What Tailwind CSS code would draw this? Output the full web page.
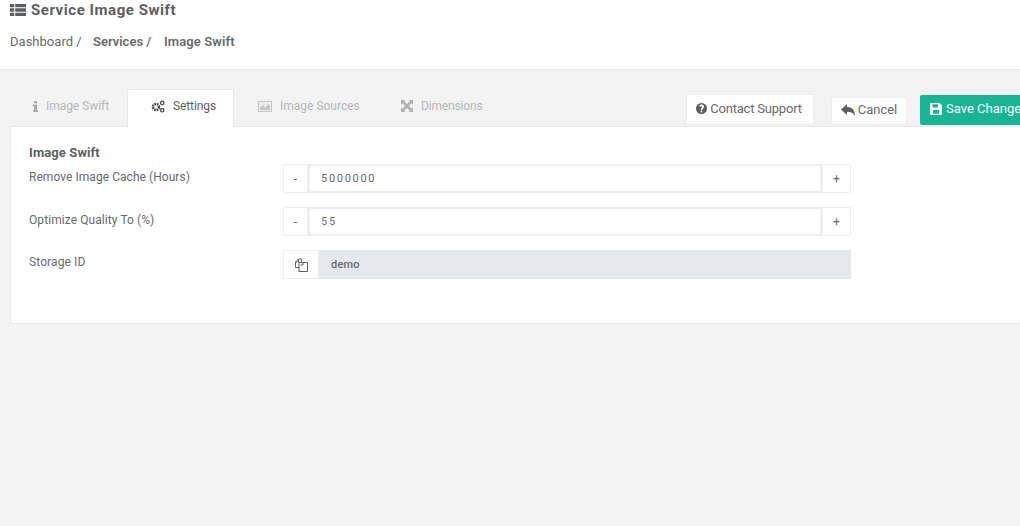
<!DOCTYPE html>
<html lang="en">
<head>
    <meta charset="UTF-8">
    <title>Service Image Swift</title>
    <script src="https://cdn.jsdelivr.net/npm/@tailwindcss/browser@4"></script>
</head>
<body class="h-[526px] w-[1020px] overflow-hidden bg-[#f3f3f4] font-['Roboto',sans-serif] text-[#676a6c]">
    <header class="h-[70px] border-b border-[#e7e7e7] bg-white pl-[10px]">
        <h1 class="flex h-[20px] items-center gap-[5px] text-[15px] leading-none font-bold tracking-[0.55px] text-[#5c5f61]">
            <svg class="h-[12px] w-[16px]" viewBox="0 0 16 12" fill="#5c5f61"><path d="M0 0h4.200v3.300H0zM5.200 0H16v3.300H5.200zM0 4.350h4.200v3.300H0zM5.200 4.350H16v3.300H5.200zM0 8.700h4.200V12H0zM5.200 8.700H16V12H5.200z"/></svg>
            Service Image Swift
        </h1>
        <nav class="mt-[13px] flex text-[13px] leading-[18px]">
            <span class="w-[83px] tracking-[0.02px]">Dashboard /</span>
            <span class="w-[71px] font-semibold">Services /</span>
            <span class="font-semibold tracking-[0.1px]">Image Swift</span>
        </nav>
    </header>

    <main class="pt-[19px] pl-[10px]">
        <div class="relative flex h-[37px] w-[1040px]">
            <a class="flex h-[34px] w-[117px] items-center pl-[23px] text-[12px] tracking-[-0.05px] text-[#b5b7b9]">
                <svg class="mr-[8px] h-[11px] w-[5px]" viewBox="0 0 5 11" fill="#a9abad"><path d="M1 0h3v2.300H1zM0 3.600h4v5.600h1V11H0V9.200h1V5.400H0z"/></svg>
                Image Swift
            </a>
            <a class="z-10 flex h-[38px] w-[107px] items-center rounded-t-[2px] border border-b-0 border-[#e7eaec] bg-white pb-[5px] pl-[23px] text-[12px] tracking-[-0.1px] text-[#5c5f61]">
                <svg class="mr-[8px] h-[13px] w-[14px]" viewBox="0 0 14 13" fill="none" stroke="#55585a"><circle cx="5" cy="7" r="3" stroke-width="2.600" stroke-dasharray="1.800 0.600"/><circle cx="11.200" cy="3" r="1.700" stroke-width="1.400"/><circle cx="11.200" cy="10.200" r="1.700" stroke-width="1.400"/></svg>
                Settings
            </a>
            <a class="flex h-[34px] w-[147px] items-center pl-[24px] text-[12px] text-[#b5b7b9]">
                <svg class="mr-[8px] h-[11px] w-[14px]" viewBox="0 0 14 11"><path fill="#c4c6c8" d="M0 0h14v11H0z"/><path fill="#eeeeee" d="M1 1h12v9H1z"/><path fill="#c4c6c8" d="M2 9V7l3-3 2.500 2.500L10 3l2 2v4z"/></svg>
                Image Sources
            </a>
            <a class="flex h-[34px] items-center pl-[20px] text-[12px] tracking-[-0.15px] text-[#b5b7b9]">
                <svg class="mr-[8px] h-[12px] w-[12px]" viewBox="0 0 12 12" fill="#b0b2b4"><path d="M0 0h4.500L3.200 1.300 6 4.100l2.800-2.800L7.500 0H12v4.500l-1.300-1.300L7.900 6l2.800 2.800L12 7.500V12H7.500l1.300-1.300L6 7.900l-2.800 2.800L4.500 12H0V7.500l1.300 1.300L4.100 6 1.300 3.200 0 4.500z"/></svg>
                Dimensions
            </a>

            <div class="absolute top-[5px] left-[676px] flex items-start">
                <button class="flex h-[31px] w-[128px] items-center justify-center gap-[3px] rounded-[2px] border border-[#eeeeee] bg-white pr-[2px] pb-[2px] text-[13px] tracking-[-0.2px] text-[#676a6c]">
                    <svg class="h-[11px] w-[11px]" viewBox="0 0 24 24" fill="#5c5f61"><path fill-rule="evenodd" d="M12 0a12 12 0 1 0 0 24 12 12 0 0 0 0-24zm-1.800 17h3.600v3.400h-3.600zM12 3.500c3.200 0 5.600 2 5.600 4.800 0 3.600-3.900 3.800-3.900 6.900h-3.400c0-4.400 3.700-4.700 3.700-6.600 0-1-.9-1.700-2-1.700-1.200 0-2 .8-2.600 1.700L6.900 6.700C8 4.800 9.800 3.500 12 3.500z"/></svg>
                    Contact Support
                </button>
                <button class="mt-[3px] ml-[17px] flex h-[28px] w-[76px] items-center justify-center gap-[3px] rounded-[2px] border border-[#eeeeee] bg-white pb-[2px] text-[13px] text-[#676a6c]">
                    <svg class="h-[12px] w-[14px]" viewBox="0 0 14 12" fill="#5c5f61"><path d="M6 0v3c5 0 8 3 8 9-1.500-3-4-4.200-8-4.200V11L0 5.500z"/></svg>
                    Cancel
                </button>
                <button class="mt-[1px] ml-[13px] flex h-[30px] w-[120px] items-center gap-[4px] rounded-[2px] bg-[#1ab394] pb-[2px] pl-[10px] text-[13px] whitespace-nowrap text-white">
                    <svg class="h-[12px] w-[12px]" viewBox="0 0 12 12" fill="white"><path fill-rule="evenodd" d="M1 0h8.500L12 2.500V11a1 1 0 0 1-1 1H1a1 1 0 0 1-1-1V1a1 1 0 0 1 1-1zm1.500 1.300v3.200h5.500V1.300zM3 7v3.700h6V7z"/></svg>
                    Save Changes
                </button>
            </div>
        </div>

        <section class="h-[198px] w-[1040px] border border-[#e7eaec] bg-white pt-[19px] pl-[18px]">
            <h2 class="text-[13px] leading-[14px] font-bold tracking-[0.1px] text-[#5c5f61]">Image Swift</h2>

            <div class="mt-[4px] flex h-[29px]">
                <label class="w-[254px] pt-[5px] text-[12px] leading-[16px] tracking-[0.05px]">Remove Image Cache (Hours)</label>
                <div class="flex h-[29px] w-[568px] text-[12px]">
                    <button class="h-full w-[25px] rounded-l-[2px] border border-[#eeeeee]">-</button>
                    <input class="h-full min-w-0 flex-1 border-2 border-[#eeeeee] pl-[11px] text-[11px] tracking-[1.7px] text-[#676a6c]" value="5000000">
                    <button class="h-full w-[29px] rounded-r-[2px] border border-[#eeeeee]">+</button>
                </div>
            </div>

            <div class="mt-[14px] flex h-[29px]">
                <label class="w-[254px] pt-[5px] text-[12px] leading-[16px] tracking-[0.08px]">Optimize Quality To (%)</label>
                <div class="flex h-[29px] w-[568px] text-[12px]">
                    <button class="h-full w-[25px] rounded-l-[2px] border border-[#eeeeee]">-</button>
                    <input class="h-full min-w-0 flex-1 border-2 border-[#eeeeee] pl-[11px] text-[11px] tracking-[1.7px] text-[#676a6c]" value="55">
                    <button class="h-full w-[29px] rounded-r-[2px] border border-[#eeeeee]">+</button>
                </div>
            </div>

            <div class="mt-[14px] flex h-[29px]">
                <label class="w-[254px] pt-[4px] text-[12px] leading-[16px] tracking-[0.1px]">Storage ID</label>
                <div class="flex h-[29px] w-[568px] text-[11px]">
                    <button class="flex h-full w-[36px] items-center justify-center border border-[#eeeeee]">
                        <svg class="h-[14px] w-[14px]" viewBox="0 0 14 14" fill="none" stroke="#5c5f61"><path d="M5 9.500H1.500V4L4.500 1h3v3"/><path d="M4.500 1v3H1.500"/><path d="M5 4.500h8.500v9H5z"/><path d="M9 4.500v2.500H6.500"/></svg>
                    </button>
                    <div class="flex flex-1 items-center bg-[#e6e9ec] pt-[1px] pl-[12px] font-medium tracking-[0.2px]">demo</div>
                </div>
            </div>
        </section>
    </main>
</body>
</html>
